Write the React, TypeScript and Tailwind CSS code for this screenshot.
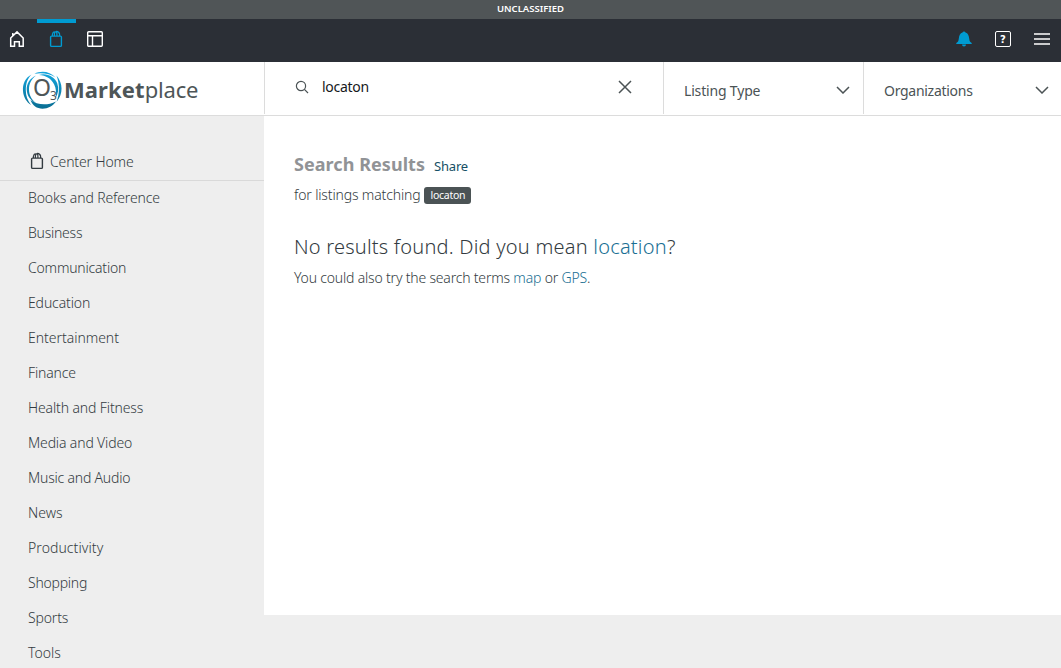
import React from "react";

const categories: [string, string][] = [
  ["Books and Reference", "tracking-[-0.12px]"],
  ["Business", "tracking-[-0.25px]"],
  ["Communication", "tracking-[-0.2px]"],
  ["Education", "tracking-[-0.12px]"],
  ["Entertainment", "tracking-[-0.03px]"],
  ["Finance", "tracking-[-0.15px]"],
  ["Health and Fitness", "tracking-[-0.13px]"],
  ["Media and Video", "tracking-[-0.15px]"],
  ["Music and Audio", "tracking-[-0.2px]"],
  ["News", "tracking-[0px]"],
  ["Productivity", "tracking-[0.08px]"],
  ["Shopping", "tracking-[-0.25px]"],
  ["Sports", "tracking-[-0.15px]"],
  ["Tools", "tracking-[0px]"],
];

function BagIcon({ className }: { className?: string }) {
  return (
    <svg width="14" height="18" viewBox="0 0 14 18" fill="none" stroke="currentColor" className={className}>
      <rect x="1.6" y="6.1" width="10.8" height="10.3" rx="1" strokeWidth="1.4" />
      <path d="M3.4 6V4.300Q3.800 2.100 5.600 1.700M5.400 6V3.800Q5.600 1.500 7.500 1.300 10 1.500 10.600 4V6M7.900 6V3.600Q7.800 2.300 6.800 2" strokeWidth="1.200" />
    </svg>
  );
}

function Chevron() {
  return (
    <svg width="14" height="8" viewBox="0 0 14 8" fill="none" stroke="#4b5355" strokeWidth="1.5" className="relative -top-px">
      <path d="M1 1l6 6 6-6" />
    </svg>
  );
}

function Logo() {
  return (
    <svg width="42" height="40" viewBox="0 0 42 40" fill="none">
      <defs>
        <linearGradient id="ring" gradientUnits="userSpaceOnUse" x1="0" y1="2" x2="0" y2="38">
          <stop offset="0" stopColor="#12a5de" />
          <stop offset="1" stopColor="#0a6f94" />
        </linearGradient>
      </defs>
      <g fill="url(#ring)">
        <path d="M9.500 4.500C3 8 .5 14 1 21c.4 6 3.500 11 8 14C5.500 30 3.800 26 3.800 20 3.800 13.500 5.500 8.500 9.500 4.500z" />
        <path d="M14 5.500C7.500 8.500 4.500 14 4.700 19.500 5 26 8.500 30.500 14 33 9.500 29.500 7 25 7 19.500 7 14 9 9.500 14 5.500z" />
        <path d="M12.500 3.800C19 .4 28 1.300 33.500 7.500 28 3.700 20 2.500 12.500 3.800z" />
        <path d="M17 4.900C25 2.500 33 7 35.300 13.500c1.700 5 1 10-1.800 14.500 1-5.500.6-9.500-1.300-13.500C29.500 8.700 24 5.200 17 4.900z" />
        <path d="M34.500 5.500C41 13 41.500 24 34.500 32c3-8 3.500-17 0-26.500z" />
        <path d="M8.500 30c6.500 5 16.500 6 25.500 1.500C31 36 26 38.700 20.500 38.700 15 38.700 10.500 35.500 8.500 30z" />
      </g>
    </svg>
  );
}

export default function App() {
  return (
    <div className="flex h-[668px] w-[1061px] flex-col overflow-hidden bg-[#eee] font-['Noto_Sans',sans-serif] text-[14px] font-light text-[#333b41]">
      <div className="flex h-[19px] shrink-0 items-center justify-center bg-[#505557] text-[9.500px] font-semibold text-white">
        <span className="-mt-px">UNCLASSIFIED</span>
      </div>
      <nav className="flex h-[43px] shrink-0 justify-between bg-[#2b2f36] text-white">
        <div className="flex">
          <div className="flex w-[37px] items-center pb-[3px] pl-[9px]">
            <svg width="16" height="18" viewBox="0 0 16 18" fill="none" stroke="currentColor" strokeWidth="1.5">
              <path d="M1.700 8v8.300h3.800v-4.600h4.800v4.600h3.900V8L8 1.900 1.700 8zM3.800 6V3" />
            </svg>
          </div>
          <div className="flex w-[39px] items-center justify-center border-t-4 border-[#009bd2] pb-[7px] pr-px text-[#009bd2]">
            <BagIcon />
          </div>
          <div className="flex w-[39px] items-center justify-center pb-[3px] pr-px">
            <svg width="16" height="16" viewBox="0 0 16 16" fill="none" stroke="currentColor" strokeWidth="1.400">
              <rect x=".7" y=".7" width="14.600" height="14.600" rx="1" />
              <path d="M1 4.800h14M5.500 5v10" />
            </svg>
          </div>
        </div>
        <div className="flex items-center pb-[3px]">
          <svg width="16" height="16" viewBox="0 0 16 16" fill="#009bd2" className="mr-[23px]">
            <path d="M8 .5c.8 0 1.200.4 1.500.9C12 2.200 12.900 4.500 13.200 7.500c.2 2.500 1 3.800 2.500 4.500v1H.3v-1c1.500-.7 2.300-2 2.500-4.500C3.100 4.500 4 2.200 6.500 1.400 6.800.9 7.200.5 8 .5zM6 13.500h4a2 2 0 0 1-4 0z" />
          </svg>
          <span className="mr-[23px] flex h-4 w-4 items-center justify-center rounded-[2px] border-[1.500px] border-white font-['DejaVu_Sans',sans-serif] text-[10px] font-bold">?</span>
          <svg width="16" height="12" viewBox="0 0 16 12" stroke="currentColor" strokeWidth="1.500" className="mr-[11px]">
            <path d="M0 1h16M0 6h16M0 11h16" />
          </svg>
        </div>
      </nav>
      <header className="flex h-[54px] shrink-0 border-b border-[#dcdcdc] bg-white pb-px">
        <div className="flex w-[265px] items-center border-r border-[#dcdcdc] pl-[22px] pt-[4px]">
          <div className="relative">
            <Logo />
            <span className="absolute left-[11px] top-[6px] text-[23px] leading-[23px] font-normal text-[#4e5658]">O</span>
            <span className="absolute left-[28px] top-[20px] text-[12px] leading-[12px] font-normal text-[#4e5658]">3</span>
          </div>
          <div className="-mt-[3px] text-[22px] leading-[24px] text-[#4e5658]">
            <span className="font-bold tracking-[0.1px]">Market</span>
            <span className="font-normal tracking-[-0.2px]">place</span>
          </div>
        </div>
        <div className="flex w-[399px] items-center border-r border-[#dcdcdc] pl-[30px] pr-[31px] pb-[2px]">
          <svg width="14" height="14" viewBox="0 0 14 14" fill="none" stroke="#4b5355" strokeWidth="1.200">
            <circle cx="6" cy="6" r="4.600" />
            <path d="M9.400 9.400l3.600 3.600" />
          </svg>
          <span className="-mt-0.5 ml-[13px] flex-1 font-normal tracking-[-0.3px] text-[#16191b]">locaton</span>
          <svg width="14" height="14" viewBox="0 0 14 14" stroke="#4b5355" strokeWidth="1.500">
            <path d="M1 1l12 12M13 1L1 13" />
          </svg>
        </div>
        <div className="flex w-[200px] items-center justify-between border-r border-[#dcdcdc] pl-5 pr-[13px] pt-[5px] font-normal text-[#4b5355]">
          <span className="tracking-[-0.17px]">Listing Type</span>
          <Chevron />
        </div>
        <div className="flex flex-1 items-center justify-between pl-5 pr-3 pt-[5px] font-normal text-[#4b5355]">
          <span className="tracking-[-0.28px]">Organizations</span>
          <Chevron />
        </div>
      </header>
      <div className="flex min-h-0 flex-1 items-start">
        <aside className="w-[264px]">
          <div className="flex h-[65px] items-center border-b border-[#d9d9d9] pl-[30px] pt-[27px]">
            <BagIcon className="mb-px" />
            <span className="ml-[6px] tracking-[-0.14px]">Center Home</span>
          </div>
          {categories.map(([name, tracking]) => (
            <div key={name} className="flex h-[35px] items-center pb-0.5 pl-7">
              <span className={tracking}>{name}</span>
            </div>
          ))}
        </aside>
        <main className="h-[499px] flex-1 bg-white pl-[30px] pt-[34px]">
          <div className="flex h-7 items-baseline leading-7">
            <h1 className="text-[18px] font-bold tracking-[0.05px] text-[#919396]">Search Results</h1>
            <a className="ml-[9px] text-[13px] font-normal tracking-[-0.2px] text-[#164f66]">Share</a>
          </div>
          <div className="flex h-8 items-center">
            <span className="tracking-[-0.15px]">for listings matching</span>
            <span className="mt-[3px] ml-[4px] flex h-[17px] items-center rounded-[3px] bg-[#4b5355] px-[6px] text-[10.500px] font-normal tracking-[-0.25px] text-white">locaton</span>
          </div>
          <h2 className="mt-[21px] text-[20px] leading-[32px] tracking-[0.22px]">
            No results found. Did you mean <a className="text-[#1a6f93]">location</a>?
          </h2>
          <p className="-mt-px leading-[32px] tracking-[-0.19px]">
            You could also try the search terms <a className="text-[#1a6f93]">map</a> or <a className="text-[#1a6f93]">GPS</a>.
          </p>
        </main>
      </div>
    </div>
  );
}
